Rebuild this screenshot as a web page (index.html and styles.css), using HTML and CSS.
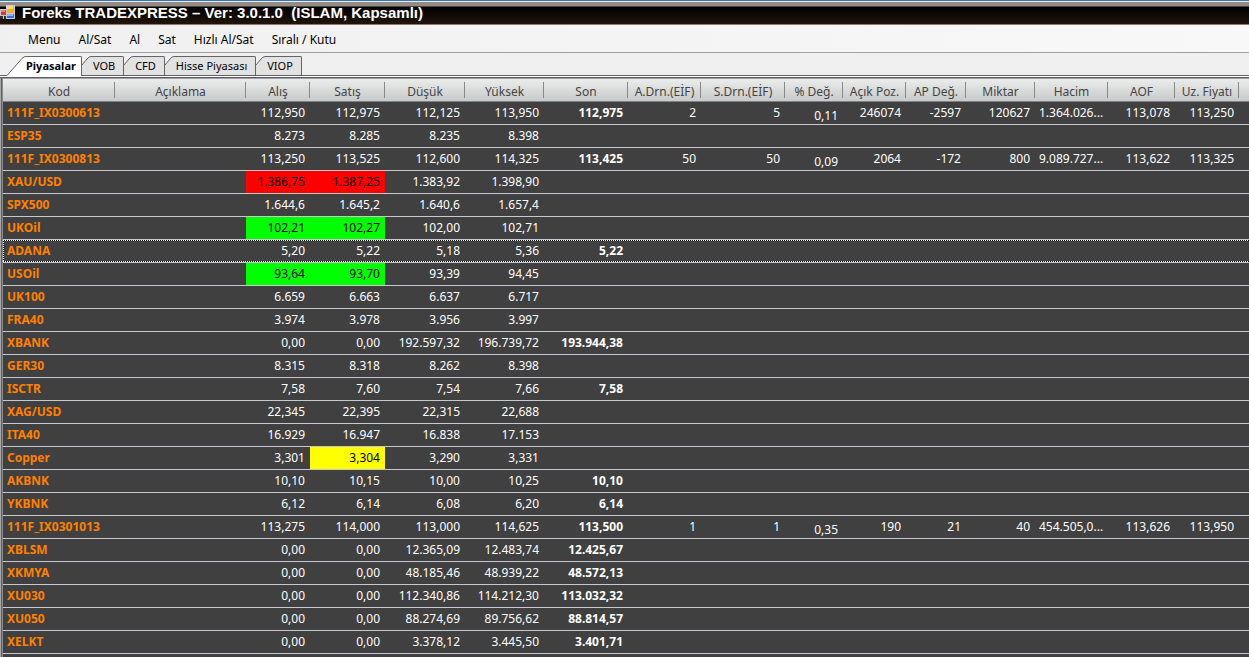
FILE: index.html
```html
<!DOCTYPE html>
<html lang="tr">
<head>
<meta charset="utf-8">
<title>Foreks TRADEXPRESS</title>
<link rel="stylesheet" href="styles.css">
</head>
<body>
<div class="app">
  <header class="titlebar">
    <svg class="app-icon" width="16" height="16" viewBox="0 0 16 16" aria-hidden="true">
      <rect x="0" y="4" width="8" height="10" fill="#c8c8cc"/>
      <rect x="1" y="5" width="5" height="5" fill="#d83a30"/>
      <rect x="1" y="5" width="4" height="2" fill="#f08070"/>
      <rect x="0" y="11" width="3" height="3" fill="#2a2a30"/>
      <rect x="4" y="11" width="3" height="3" fill="#2a2a30"/>
      <rect x="6" y="0" width="9" height="14" fill="#c8ccd4"/>
      <rect x="7" y="1" width="7" height="7" fill="#f0b020"/>
      <rect x="7" y="1" width="6" height="3" fill="#ffd870"/>
      <rect x="7" y="9" width="7" height="4" fill="#2f6fe0"/>
      <rect x="7" y="9" width="6" height="2" fill="#8db8f8"/>
    </svg>
    <h1 class="title">Foreks TRADEXPRESS – Ver: 3.0.1.0&nbsp; (ISLAM, Kapsamlı)</h1>
  </header>
  <nav class="menu">
    <button class="menu-item">Menu</button>
    <button class="menu-item">Al/Sat</button>
    <button class="menu-item">Al</button>
    <button class="menu-item">Sat</button>
    <button class="menu-item">Hızlı Al/Sat</button>
    <button class="menu-item">Sıralı / Kutu</button>
  </nav>
  <div class="tabs" role="tablist" id="tabs"></div>
  <main class="grid">
    <table class="quotes">
      <colgroup id="cols"></colgroup>
      <thead><tr id="head"></tr></thead>
      <tbody id="body"></tbody>
    </table>
  </main>
</div>
<script src="app.js"></script>
</body>
</html>
```

FILE: styles.css
```css
* {
  box-sizing: border-box;
}

body {
  margin: 0;
  background: #404040;
  font-family: "Noto Sans", "Open Sans", sans-serif;
  font-size: 12px;
}

button {
  margin: 0;
  border: 0;
  background: none;
  color: #000;
  font: inherit;
}

.app {
  display: flex;
  flex-direction: column;
  height: 100vh;
  overflow: hidden;
}

.titlebar {
  display: flex;
  flex: none;
  align-items: center;
  gap: 6px;
  height: 25px;
  padding-top: 2px;
  border-bottom: 1px solid #8c786e;
  background: linear-gradient(#3c78aa 0 1px, #e4eef6 1px 2px, #948a86 2px 6px, #484440 6px 7px, #000 7px, #20140a 24px);
}

.app-icon {
  flex: none;
}

.title {
  margin: 0;
  color: #fff;
  font-family: "Liberation Sans", Arial, sans-serif;
  font-size: 15px;
  line-height: 16px;
  font-weight: bold;
  white-space: pre;
}

.menu {
  display: flex;
  flex: none;
  align-items: center;
  gap: 2px;
  height: 28px;
  padding: 2px 20px 0;
  border-bottom: 1px solid #a0a0a0;
  background: linear-gradient(90deg, #f0f0f0, #f8f8f8);
}

.menu-item {
  padding: 0 8px;
  line-height: 20px;
}

.tabs {
  display: flex;
  flex: none;
  align-items: flex-end;
  height: 25px;
  padding-left: 7px;
  border-bottom: 1px solid #606064;
  background: linear-gradient(#f0f0f0 0 22px, #646468 22px 23px, #fff 23px);
}

.tab {
  display: flex;
  height: 21px;
  padding: 0 0 2px;
  font-size: 11px;
}

.tab-edge {
  display: block;
  flex: none;
  fill: #e2e2e2;
  stroke: #646468;
}

.tab-label {
  height: 19px;
  padding: 0 8px 0 2px;
  border: 1px solid #646468;
  border-width: 1px 1px 0 0;
  border-top-right-radius: 2px;
  background: #e2e2e2;
  line-height: 17px;
}

.tab.is-active .tab-label {
  height: 20px;
  padding: 0 5px 0 0;
  background: #fff;
  font-weight: bold;
}

.tab.is-active .tab-edge {
  fill: #fff;
}

.grid {
  flex: 1;
  min-height: 0;
  overflow: hidden;
  padding-left: 3px;
  background: linear-gradient(90deg, #a8a8a8 0 1px, #606064 1px 2px, #8c8c90 2px 3px, #404040 3px);
}

.quotes {
  width: 100%;
  table-layout: fixed;
  border-collapse: separate;
  border-spacing: 0;
  background: #404040;
}

.quotes th {
  height: 24px;
  padding: 3px 0 0;
  border-top: 1px solid #a0a0a4;
  border-bottom: 1px solid #808080;
  background: linear-gradient(#888, #888) right 3px / 1px 16px no-repeat, linear-gradient(#ebecec, #c8cacb);
  color: #444;
  font-weight: normal;
  line-height: 18px;
  white-space: nowrap;
}

.quotes th:last-child {
  background: linear-gradient(#ebecec, #c8cacb);
}

.quotes td {
  height: 23px;
  padding: 1px 5px 1px 4px;
  overflow: hidden;
  border-bottom: 1px solid #c8c8d0;
  color: #fff;
  line-height: 20px;
  text-align: right;
  white-space: nowrap;
}

.quotes .code {
  color: #ff8000;
  font-weight: bold;
  text-align: left;
}

.quotes .last {
  font-weight: bold;
}

.quotes .change {
  padding: 6px 5px 0 4px;
  line-height: 16px;
}

.quotes .down {
  background: #f00;
  color: #000;
}

.quotes .up {
  background: #0f0;
  color: #000;
}

.quotes .same {
  background: #ff0;
  color: #000;
}

.focused {
  background:
    repeating-linear-gradient(90deg, #fff 0 1px, #000 1px 2px) 0 0 / 100% 1px no-repeat,
    repeating-linear-gradient(90deg, #fff 0 1px, #000 1px 2px) 0 21px / 100% 1px no-repeat,
    repeating-linear-gradient(#fff 0 1px, #000 1px 2px) 0 0 / 1px 22px no-repeat;
}
```

FILE: app.js
```js
const columns = [
  ["Kod", 112], ["Açıklama", 131], ["Alış", 64], ["Satış", 75], ["Düşük", 80],
  ["Yüksek", 79], ["Son", 84], ["A.Drn.(EİF)", 73], ["S.Drn.(EİF)", 84],
  ["% Değ.", 58], ["Açık Poz.", 63], ["AP Değ.", 60], ["Miktar", 69],
  ["Hacim", 73], ["AOF", 67], ["Uz. Fiyatı", 64], ["", 0]
];

// Values follow the column order, without the description column.
// A leading "+", "!" or "=" marks a cell as up, down or same.
const rows = `
111F_IX0300613|112,950|112,975|112,125|113,950|112,975|2|5|0,11|246074|-2597|120627|1.364.026...|113,078|113,250
ESP35|8.273|8.285|8.235|8.398
111F_IX0300813|113,250|113,525|112,600|114,325|113,425|50|50|0,09|2064|-172|800|9.089.727...|113,622|113,325
XAU/USD|!1.386,75|!1.387,25|1.383,92|1.398,90
SPX500|1.644,6|1.645,2|1.640,6|1.657,4
UKOil|+102,21|+102,27|102,00|102,71
ADANA|5,20|5,22|5,18|5,36|5,22
USOil|+93,64|+93,70|93,39|94,45
UK100|6.659|6.663|6.637|6.717
FRA40|3.974|3.978|3.956|3.997
XBANK|0,00|0,00|192.597,32|196.739,72|193.944,38
GER30|8.315|8.318|8.262|8.398
ISCTR|7,58|7,60|7,54|7,66|7,58
XAG/USD|22,345|22,395|22,315|22,688
ITA40|16.929|16.947|16.838|17.153
Copper|3,301|=3,304|3,290|3,331
AKBNK|10,10|10,15|10,00|10,25|10,10
YKBNK|6,12|6,14|6,08|6,20|6,14
111F_IX0301013|113,275|114,000|113,000|114,625|113,500|1|1|0,35|190|21|40|454.505,0...|113,626|113,950
XBLSM|0,00|0,00|12.365,09|12.483,74|12.425,67
XKMYA|0,00|0,00|48.185,46|48.939,22|48.572,13
XU030|0,00|0,00|112.340,86|114.212,30|113.032,32
XU050|0,00|0,00|88.274,69|89.756,62|88.814,57
XELKT|0,00|0,00|3.378,12|3.445,50|3.401,71`.trim().split("\n");

const states = { "+": "up", "!": "down", "=": "same" };

for (const [name, width] of columns) {
  const col = document.createElement("col");
  if (width) col.style.width = width + "px";
  document.getElementById("cols").append(col);
  const th = document.createElement("th");
  th.textContent = name;
  document.getElementById("head").append(th);
}

for (const line of rows) {
  const values = line.split("|");
  values.splice(1, 0, "");
  const tr = document.createElement("tr");
  if (values[0] === "ADANA") tr.className = "focused";
  columns.forEach((column, i) => {
    const td = document.createElement("td");
    let text = values[i] || "";
    if (states[text[0]]) {
      td.className = states[text[0]];
      text = text.slice(1);
    }
    if (i === 0) td.className = "code";
    if (i === 6) td.className = "last";
    if (i === 9) td.className = "change";
    td.textContent = text;
    tr.append(td);
  });
  document.getElementById("body").append(tr);
}

const tabNames = ["Piyasalar", "VOB", "CFD", "Hisse Piyasası", "VIOP"];
tabNames.forEach((name, i) => {
  const active = i === 0;
  const edge = active
    ? '<svg class="tab-edge" width="19" height="20" viewBox="0 0 19 20"><path d="M0 19.5L15 2.500Q17 .5 19 .5V20H0z" stroke="none"/><path d="M0 19.5L15 2.500Q17 .5 19 .5" fill="none"/></svg>'
    : '<svg class="tab-edge" width="9" height="19" viewBox="0 0 9 19"><path d="M0 9L5 3Q7 .5 9 .5V19H0z" stroke="none"/><path d="M0 9L5 3Q7 .5 9 .5" fill="none"/></svg>';
  const button = document.createElement("button");
  button.className = active ? "tab is-active" : "tab";
  button.setAttribute("role", "tab");
  button.setAttribute("aria-selected", active);
  button.innerHTML = edge + '<span class="tab-label">' + name + "</span>";
  document.getElementById("tabs").append(button);
});
```
